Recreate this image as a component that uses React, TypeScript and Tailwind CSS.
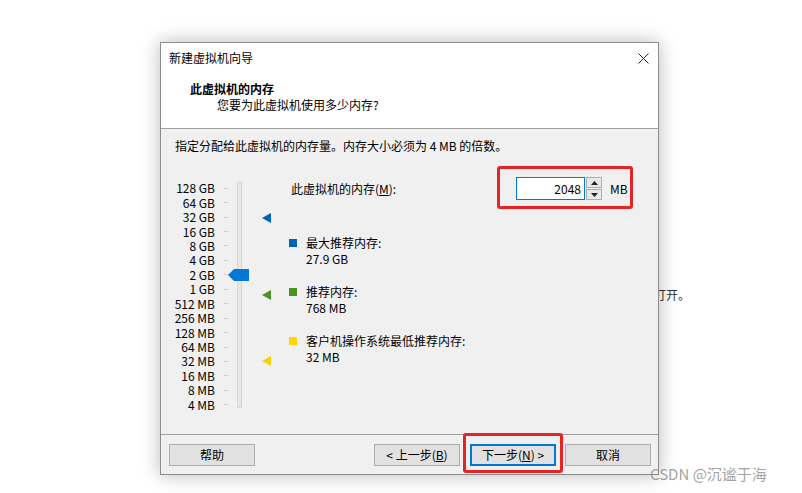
import React from 'react';

const FONT = { fontFamily: '"Noto Sans CJK SC", "Noto Sans", sans-serif' };

const LEVELS = ['128 GB', '64 GB', '32 GB', '16 GB', '8 GB', '4 GB', '2 GB', '1 GB', '512 MB', '256 MB', '128 MB', '64 MB', '32 MB', '16 MB', '8 MB', '4 MB'];

function Marker({ top, color }: { top: number; color: string }) {
  return (
    <svg className="absolute left-[101px]" style={{ top }} width="10" height="10" viewBox="0 0 10 10">
      <polygon points="0,5 9,0 9,10" fill={color} />
    </svg>
  );
}

function Legend({ color, label, value, className }: { color: string; label: string; value: string; className: string }) {
  return (
    <div className={`flex pl-[13px] ${className}`}>
      <div className={`mt-[4px] h-[8px] w-[8px] ${color}`} />
      <div className="ml-[9px] leading-[15.5px]">
        <div>{label}</div>
        <div>{value}</div>
      </div>
    </div>
  );
}

function Btn({ children, active }: { children: React.ReactNode; active?: boolean }) {
  return (
    <button
      className={`flex h-[22px] w-[86px] items-center justify-center bg-[#e1e1e1] text-[12px] text-black ${
        active ? 'border-2 border-[#0078d7]' : 'border border-[#adadad]'
      }`}
    >
      {children}
    </button>
  );
}

export default function App() {
  return (
    <div className="relative h-[493px] w-[802px] overflow-hidden bg-white text-[12px] text-black" style={FONT}>
      <div className="absolute left-[654px] top-[287px] leading-[16px] text-[#333]">打开。</div>

      <div className="absolute left-[160px] top-[42px] flex h-[433px] w-[499px] flex-col border border-[#8c8c8c] bg-white shadow-[0_0_18px_rgba(0,0,0,0.28)]">
        {/* title bar */}
        <div className="flex h-[30px] items-center justify-between pl-[8px] pr-[9px]">
          <span>新建虚拟机向导</span>
          <svg width="11" height="11" viewBox="0 0 11 11">
            <path d="M0.5 0.5L10.5 10.5M10.5 0.5L0.5 10.5" stroke="#222" strokeWidth="1" />
          </svg>
        </div>

        {/* header */}
        <div className="h-[56px] border-b border-[#a0a0a0] pt-[8px] leading-[16px]">
          <div className="pl-[29px] font-bold">此虚拟机的内存</div>
          <div className="pl-[56px]">您要为此虚拟机使用多少内存?</div>
        </div>

        {/* body */}
        <div className="flex h-[305px] flex-col bg-[#f0f0f0]">
          <div className="pl-[14px] pt-[9px] leading-[16px]">指定分配给此虚拟机的内存量。内存大小必须为 4 MB 的倍数。</div>

          <div className="mt-[21px] flex">
            {/* slider */}
            <div className="relative w-[115px] pt-[6px]">
              {LEVELS.map((l) => (
                <div key={l} className="flex h-[14.45px] items-center">
                  <span className="w-[54px] text-right leading-[14px]">{l}</span>
                  <span className="ml-[9px] h-px w-[4px] bg-[#cfcfcf]" />
                </div>
              ))}
              <div className="absolute left-[76px] top-[7px] h-[226px] w-[5px] border border-[#d6d6d6] bg-[#e7e7e7]" />
              <svg className="absolute left-[67px] top-[94px]" width="21" height="12" viewBox="0 0 21 12">
                <polygon points="0,6 6,0 21,0 21,12 6,12" fill="#0078d7" />
              </svg>
              <Marker top={38} color="#0063b1" />
              <Marker top={115} color="#4a9222" />
              <Marker top={181} color="#f5d300" />
            </div>

            {/* values */}
            <div className="flex flex-1 flex-col">
              <div className="relative mt-[2px] flex h-[23px] items-center pl-[15px]">
                <span className="w-[225px]">
                  此虚拟机的内存(<span className="underline">M</span>):
                </span>
                <div className="flex h-[23px] w-[69px] items-center justify-end border border-[#0078d7] bg-white pr-[3px]">2048</div>
                <div className="ml-px flex h-[23px] w-[16px] flex-col gap-px">
                  <div className="flex flex-1 items-center justify-center border border-[#adadad] bg-[#e8e8e8]">
                    <svg width="7" height="4" viewBox="0 0 7 4"><polygon points="3.5,0 7,4 0,4" fill="#222" /></svg>
                  </div>
                  <div className="flex flex-1 items-center justify-center border border-[#adadad] bg-[#e8e8e8]">
                    <svg width="7" height="4" viewBox="0 0 7 4"><polygon points="0,0 7,0 3.5,4" fill="#222" /></svg>
                  </div>
                </div>
                <span className="ml-[8px]">MB</span>
                <div className="absolute left-[221px] top-[-11px] h-[43px] w-[136px] rounded-[3px] border-[3px] border-[#e52525]" />
              </div>

              <Legend className="mt-[35px]" color="bg-[#0063b1]" label="最大推荐内存:" value="27.9 GB" />
              <Legend className="mt-[18px]" color="bg-[#4a9222]" label="推荐内存:" value="768 MB" />
              <Legend className="mt-[18px]" color="bg-[#ffd700]" label="客户机操作系统最低推荐内存:" value="32 MB" />
            </div>
          </div>
        </div>

        {/* footer */}
        <div className="flex flex-1 items-start border-t border-[#a0a0a0] bg-[#f0f0f0] pl-[8px] pr-[7px] pt-[9px]">
          <Btn>帮助</Btn>
          <div className="ml-auto flex gap-[9px]">
            <div className="flex gap-[10px]">
              <Btn>
                &lt; 上一步(<span className="underline">B</span>)
              </Btn>
              <div className="relative">
                <Btn active>
                  下一步(<span className="underline">N</span>) &gt;
                </Btn>
                <div className="absolute left-[-7px] top-[-11px] h-[40px] w-[100px] rounded-[3px] border-[3px] border-[#e52525]" />
              </div>
            </div>
            <Btn>取消</Btn>
          </div>
        </div>
      </div>

      <div className="absolute left-[650px] top-[463px] text-[15px] leading-[22px] text-[#8a8a8a]/80">CSDN @沉谧于海</div>
    </div>
  );
}
